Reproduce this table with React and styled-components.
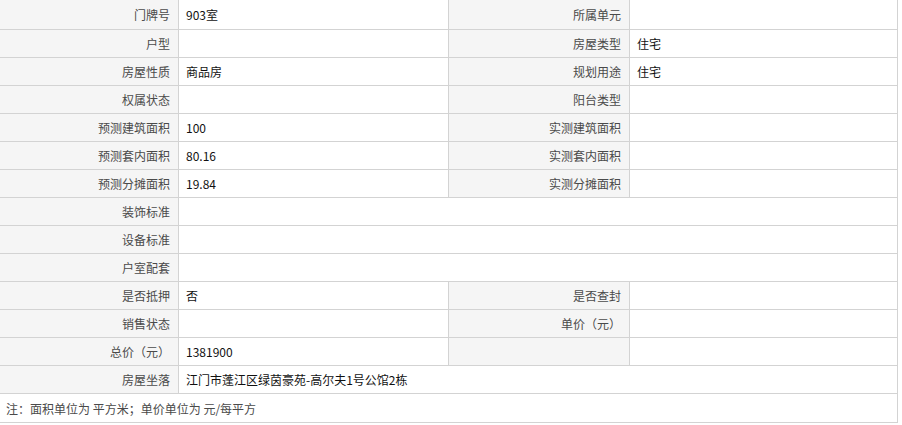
import React from "react";
import styled, { createGlobalStyle } from "styled-components";

const Global = createGlobalStyle`
  html, body { margin: 0; padding: 0; background: #ffffff; }
  body { font-family: "Noto Sans CJK SC", "Noto Sans", sans-serif; }
`;

const Sheet = styled.div`
  width: 898px;
  display: grid;
  grid-template-columns: 179px 270px 181px 268px;
  grid-template-rows: 30px repeat(13, 28px) 29px;
  font-size: 12px;
  line-height: 1;
`;

const Cell = styled.div`
  display: flex;
  align-items: center;
  border-right: 1px solid #d3d3d3;
  border-bottom: 1px solid #d3d3d3;
  box-sizing: border-box;
  white-space: nowrap;
  overflow: hidden;
`;

const Label = styled(Cell)`
  background: #f5f5f5;
  color: #4a4a4a;
  justify-content: flex-end;
  padding-right: 8px;
  padding-top: 1px;
`;

const Value = styled(Cell)`
  background: #ffffff;
  color: #111111;
  padding-left: 7px;
  padding-top: 1px;
  grid-column: ${(p) => (p.$wide ? "span 3" : "span 1")};
`;

const Note = styled(Cell)`
  grid-column: 1 / -1;
  color: #4a4a4a;
  padding-left: 6px;
  padding-top: 1px;
`;

const rows = [
  ["门牌号", "903室", "所属单元", ""],
  ["户型", "", "房屋类型", "住宅"],
  ["房屋性质", "商品房", "规划用途", "住宅"],
  ["权属状态", "", "阳台类型", ""],
  ["预测建筑面积", "100", "实测建筑面积", ""],
  ["预测套内面积", "80.16", "实测套内面积", ""],
  ["预测分摊面积", "19.84", "实测分摊面积", ""],
  ["装饰标准", ""],
  ["设备标准", ""],
  ["户室配套", ""],
  ["是否抵押", "否", "是否查封", ""],
  ["销售状态", "", "单价（元）", ""],
  ["总价（元）", "1381900", "", ""],
  ["房屋坐落", "江门市蓬江区绿茵豪苑-高尔夫1号公馆2栋"],
];

export default function App() {
  return (
    <>
      <Global />
      <Sheet>
        {rows.map((r, i) =>
          r.length === 2 ? (
            <React.Fragment key={i}>
              <Label>{r[0]}</Label>
              <Value $wide>{r[1]}</Value>
            </React.Fragment>
          ) : (
            <React.Fragment key={i}>
              <Label>{r[0]}</Label>
              <Value>{r[1]}</Value>
              <Label>{r[2]}</Label>
              <Value>{r[3]}</Value>
            </React.Fragment>
          )
        )}
        <Note>注：面积单位为 平方米；单价单位为 元/每平方</Note>
      </Sheet>
    </>
  );
}
